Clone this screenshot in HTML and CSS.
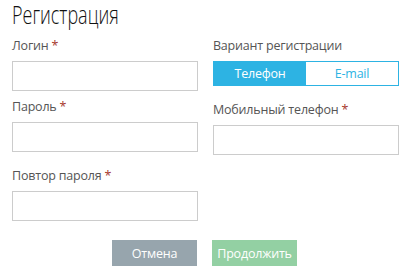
FILE: index.html
```html
<!DOCTYPE html>
<html lang="ru">
  <head>
    <meta charset="UTF-8" />
    <title>Регистрация</title>
    <link rel="stylesheet" href="styles.css">
  </head>
  <body>
    <div class="form">
      <h1>Регистрация</h1>

      <div class="columns">
        <div class="col">
          <div class="field first">
            <label>Логин <span class="req">*</span></label>
            <input type="text" id="login" />
          </div>
          <div class="field second">
            <label>Пароль <span class="req">*</span></label>
            <input type="password" id="password" />
          </div>
          <div class="field">
            <label>Повтор пароля <span class="req">*</span></label>
            <input type="password" id="password2" />
          </div>
        </div>

        <div class="col">
          <div class="field first">
            <label>Вариант регистрации</label>
            <div class="toggle">
              <button class="active">Телефон</button>
              <button>E-mail</button>
            </div>
          </div>
          <div class="field">
            <label>Мобильный телефон <span class="req">*</span></label>
            <input type="tel" id="phone" />
          </div>
        </div>
      </div>

      <div class="actions">
        <button class="btn cancel">Отмена</button>
        <button class="btn submit">Продолжить</button>
      </div>
    </div>
  </body>
</html>
```

FILE: styles.css
```css
body {
  margin: 0;
  background: #fff;
  font-family: "Open Sans", sans-serif;
  color: #555;
}

.form {
  padding: 0 19px 0 12px;
}

h1 {
  display: inline-block;
  margin: 0;
  font-family: "Open Sans", sans-serif;
  font-size: 25px;
  font-weight: 300;
  line-height: 28px;
  color: #111;
  transform: scaleX(0.72);
  transform-origin: left center;
}

.columns {
  display: grid;
  grid-template-columns: 186px 186px;
  column-gap: 15px;
}

.col {
  display: flex;
  flex-direction: column;
}

.field {
  margin-top: 16px;
}

.field.first {
  margin-top: 9px;
}

.col .field.second {
  margin-top: 8px;
}

label {
  display: block;
  font-size: 12.5px;
  letter-spacing: -0.2px;
  line-height: 16px;
  margin-bottom: 7px;
  color: #555;
}

.req {
  color: #a6372b;
}

input {
  display: block;
  box-sizing: border-box;
  width: 186px;
  height: 30px;
  margin: 0;
  border: 1px solid #ccc;
  background: #fff;
}

.toggle {
  display: flex;
  box-sizing: border-box;
  width: 186px;
  height: 25px;
  border: 1px solid #2db3e3;
}

.toggle button {
  flex: 1;
  border: none;
  background: #fff;
  color: #2db3e3;
  font-family: "Open Sans", sans-serif;
  font-size: 12.5px;
  letter-spacing: -0.2px;
  padding: 0;
}

.toggle button.active {
  background: #2db3e3;
  color: #fff;
}

.actions {
  display: flex;
  justify-content: center;
  gap: 15px;
  margin-top: 19px;
  padding-right: 2px;
}

.btn {
  width: 85px;
  height: 26px;
  border: none;
  padding: 0;
  font-family: "Open Sans", sans-serif;
  font-size: 12.5px;
  letter-spacing: -0.2px;
  color: #fff;
}

.btn.cancel {
  background: #97a5ad;
}

.btn.submit {
  background: #93d0a3;
}
```
